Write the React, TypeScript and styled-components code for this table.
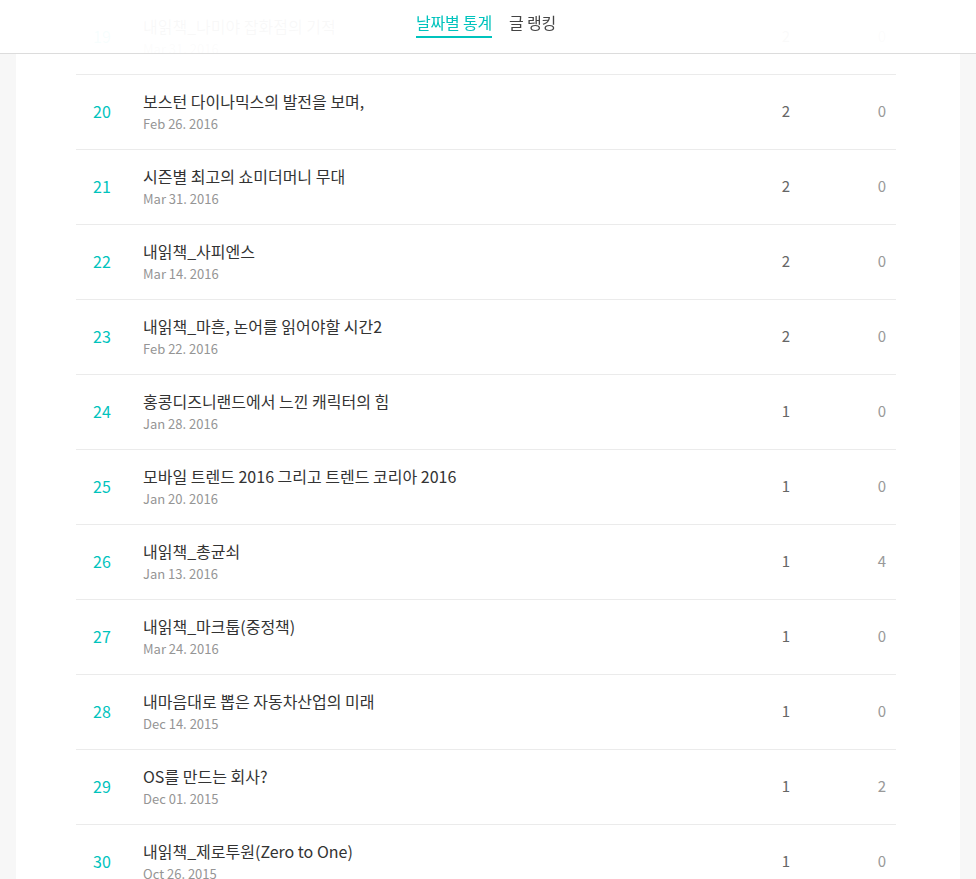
import * as React from "react";
import styled, { createGlobalStyle } from "styled-components";

type Post = {
    rank: number;
    title: string;
    date: string;
    views: number;
    comments: number;
};

const posts: Post[] = [
    { rank: 19, title: "내읽책_나미야 잡화점의 기적", date: "Mar 31. 2016", views: 2, comments: 0 },
    { rank: 20, title: "보스턴 다이나믹스의 발전을 보며,", date: "Feb 26. 2016", views: 2, comments: 0 },
    { rank: 21, title: "시즌별 최고의 쇼미더머니 무대", date: "Mar 31. 2016", views: 2, comments: 0 },
    { rank: 22, title: "내읽책_사피엔스", date: "Mar 14. 2016", views: 2, comments: 0 },
    { rank: 23, title: "내읽책_마흔, 논어를 읽어야할 시간2", date: "Feb 22. 2016", views: 2, comments: 0 },
    { rank: 24, title: "홍콩디즈니랜드에서 느낀 캐릭터의 힘", date: "Jan 28. 2016", views: 1, comments: 0 },
    { rank: 25, title: "모바일 트렌드 2016 그리고 트렌드 코리아 2016", date: "Jan 20. 2016", views: 1, comments: 0 },
    { rank: 26, title: "내읽책_총균쇠", date: "Jan 13. 2016", views: 1, comments: 4 },
    { rank: 27, title: "내읽책_마크툽(중정책)", date: "Mar 24. 2016", views: 1, comments: 0 },
    { rank: 28, title: "내마음대로 뽑은 자동차산업의 미래", date: "Dec 14. 2015", views: 1, comments: 0 },
    { rank: 29, title: "OS를 만드는 회사?", date: "Dec 01. 2015", views: 1, comments: 2 },
    { rank: 30, title: "내읽책_제로투원(Zero to One)", date: "Oct 26. 2015", views: 1, comments: 0 },
];

const GlobalStyle = createGlobalStyle`
    html, body {
        margin: 0;
        padding: 0;
        background: #f7f7f7;
        overflow: hidden;
    }
    body {
        font-family: "Noto Sans CJK KR", "Noto Sans", sans-serif;
        -webkit-font-smoothing: antialiased;
    }
`;

const Header = styled.header`
    position: fixed;
    top: 0;
    left: 0;
    right: 0;
    height: 53px;
    background: rgba(255, 255, 255, 0.97);
    border-bottom: 1px solid #dcdcdc;
    display: flex;
    justify-content: center;
    align-items: flex-start;
    gap: 17px;
    padding-right: 4px;
    z-index: 10;
`;

const Tab = styled.a<{ $active?: boolean }>`
    margin-top: 9px;
    font-size: 16px;
    line-height: 26px;
    letter-spacing: -0.2px;
    color: ${(p) => (p.$active ? "#00c3bd" : "#444")};
    text-decoration: none;
    padding-bottom: 1px;
    border-bottom: 2px solid ${(p) => (p.$active ? "#00c3bd" : "transparent")};
    cursor: pointer;
`;

const Sheet = styled.main`
    margin: 0 16px;
    background: #fff;
    min-height: 100vh;
    padding: 0 64px 0 60px;
`;

const List = styled.ul`
    list-style: none;
    margin: 0;
    padding: 0;
`;

const Row = styled.li`
    display: grid;
    grid-template-columns: 52px 1fr 96px 96px;
    align-items: center;
    height: 74px;
    padding-right: 10px;
    border-bottom: 1px solid #ebebeb;
`;

const Rank = styled.span`
    text-align: center;
    font-size: 16px;
    padding-bottom: 2px;
    color: #00c3bd;
`;

const Info = styled.div`
    align-self: start;
    padding: 15px 0 0 15px;
    display: flex;
    flex-direction: column;
    gap: 2px;
    min-width: 0;
`;

const Title = styled.span`
    font-size: 16px;
    line-height: 22px;
    color: #333;
    white-space: nowrap;
`;

const DateText = styled.span`
    font-size: 13px;
    line-height: 20px;
    color: #959595;
`;

const Count = styled.span<{ $light?: boolean }>`
    text-align: right;
    font-size: 15px;
    padding-bottom: 4px;
    color: ${(p) => (p.$light ? "#999" : "#666")};
`;

const App: React.FC = () => {
    const [tab, setTab] = React.useState("date");

    return (
        <>
            <GlobalStyle />
            <Header>
                <Tab $active={tab === "date"} onClick={() => setTab("date")}>날짜별 통계</Tab>
                <Tab $active={tab === "rank"} onClick={() => setTab("rank")}>글 랭킹</Tab>
            </Header>
            <Sheet>
                <List>
                    {posts.map((post) => (
                        <Row key={post.rank}>
                            <Rank>{post.rank}</Rank>
                            <Info>
                                <Title>{post.title}</Title>
                                <DateText>{post.date}</DateText>
                            </Info>
                            <Count>{post.views}</Count>
                            <Count $light>{post.comments}</Count>
                        </Row>
                    ))}
                </List>
            </Sheet>
        </>
    );
};

export default App;
